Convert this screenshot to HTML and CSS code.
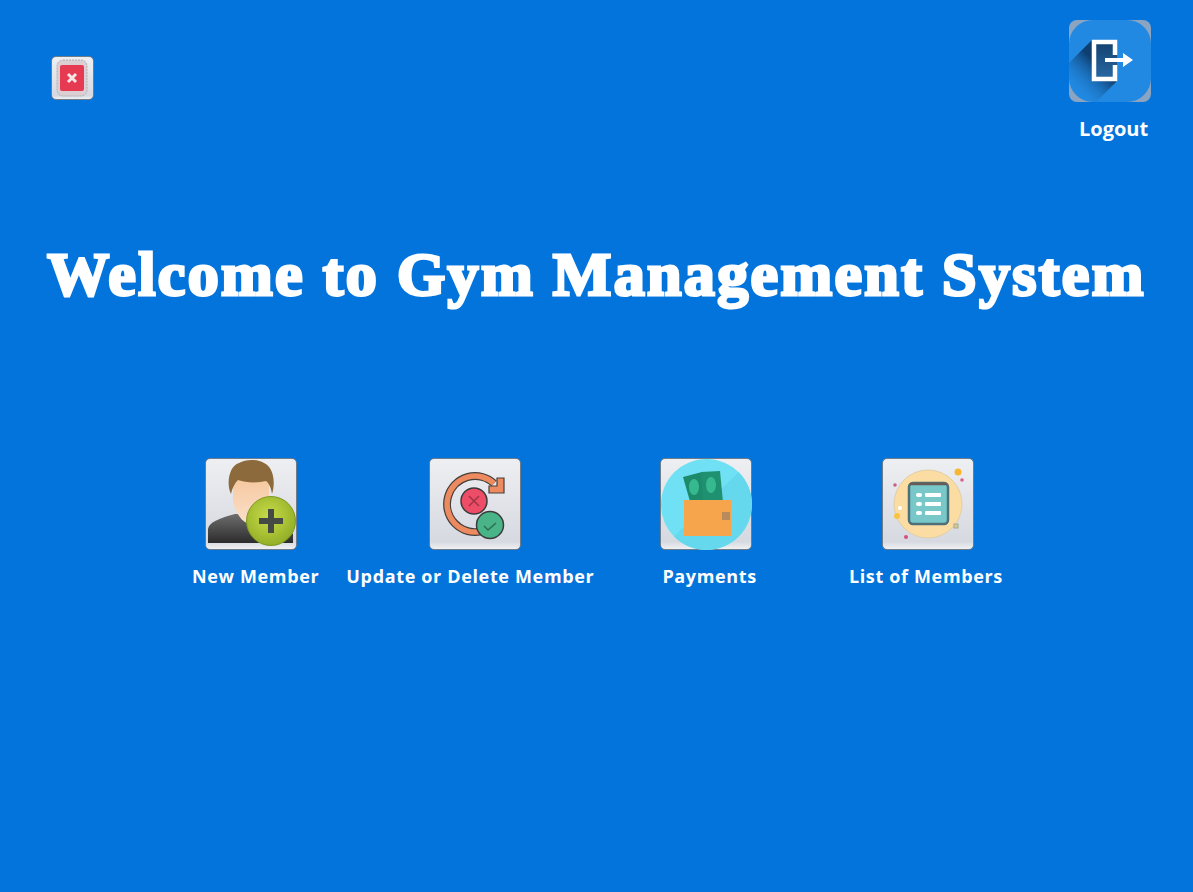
FILE: index.html
```html
<!DOCTYPE html>
<html lang="en">

<head>
    <meta charset="UTF-8">
    <title>Gym Management System</title>
    <link rel="stylesheet" href="styles.css">
</head>

<body>
    <div class="top">
        <button class="btn closeBtn">
            <svg width="41" height="42" viewBox="0 0 41 42">
                <rect x="5" y="3" width="30" height="36" rx="6" fill="#dccfd4" stroke="#b0b0b4" stroke-dasharray="2 1" />
                <rect x="8" y="8" width="24" height="26" rx="2" fill="#e63a52" />
                <path d="M16 17l8 8M24 17l-8 8" stroke="#f6e4e6" stroke-width="3" />
            </svg>
        </button>
        <div class="logout">
            <button class="logoutBtn">
                <svg width="82" height="82" viewBox="0 0 82 82">
                    <defs>
                        <linearGradient id="shade" gradientUnits="userSpaceOnUse" x1="32" y1="48" x2="6" y2="74">
                            <stop offset="0" stop-color="#0f3f70" />
                            <stop offset="1" stop-color="#2189e2" stop-opacity="0" />
                        </linearGradient>
                        <linearGradient id="door" x1="0" y1="0" x2="0" y2="1">
                            <stop offset="0" stop-color="#123f6c" />
                            <stop offset="1" stop-color="#2a6ba8" />
                        </linearGradient>
                    </defs>
                    <rect width="82" height="82" rx="8" fill="#8ba4c2" />
                    <rect width="82" height="82" rx="24" fill="#2189e2" />
                    <path d="M23 20L0 43v27l12 12h15l21-21z" fill="url(#shade)" />
                    <path d="M23 20h25v41H23z" fill="url(#door)" />
                    <path d="M46 35V22H25v37h21V45" fill="none" stroke="#fff" stroke-width="4.500" />
                    <path d="M36 38h18v-5l10 7-10 7v-5H36z" fill="#fff" />
                </svg>
            </button>
            <span class="logoutText">Logout</span>
        </div>
    </div>

    <h1 class="title">Welcome to Gym Management System</h1>

    <div class="iconRow">
        <button class="btn menuBtn">
            <svg width="89" height="89" viewBox="0 0 89 89">
                <defs>
                    <linearGradient id="body" x1="0" y1="0" x2="0" y2="1">
                        <stop offset="0" stop-color="#6d6d6d" />
                        <stop offset="1" stop-color="#2c2c2c" />
                    </linearGradient>
                    <linearGradient id="face" x1="0" y1="0" x2="0" y2="1">
                        <stop offset="0" stop-color="#f6c9a0" />
                        <stop offset="1" stop-color="#fbe0cb" />
                    </linearGradient>
                    <radialGradient id="lime" cx=".45" cy=".4" r=".7">
                        <stop offset="0" stop-color="#c9dc4a" />
                        <stop offset="1" stop-color="#8aa821" />
                    </radialGradient>
                </defs>
                <path d="M1 83V69c1-7 12-11 27-15h30l28 20v9z" fill="url(#body)" />
                <path d="M26 20h36v22c-3 12-10 22-18 22s-15-10-18-22z" fill="url(#face)" />
                <path d="M24 34C19 24 22 6 32 3 39-1 50-1 57 3c9 4 12 18 8 31-1-6-3-11-6-13-8 2-20 2-28-1-3 3-6 8-7 14z" fill="#8c6a3c" />
                <circle cx="64" cy="61" r="24.500" fill="url(#lime)" stroke="#7d9a20" />
                <path d="M64 49v24M52 61h24" stroke="#454a45" stroke-width="6" />
            </svg>
        </button>
        <button class="btn menuBtn">
            <svg width="89" height="89" viewBox="0 0 89 89">
                <path d="M50 71.400A28 28 0 1 1 63 23.400" fill="none" stroke="#45403c" stroke-width="8" />
                <path d="M50 71.400A28 28 0 1 1 63 23.400" fill="none" stroke="#ee8a60" stroke-width="5.500" />
                <path d="M58 26h8v-8h7v15H58z" fill="#ee8a60" stroke="#45403c" stroke-width="1.200" />
                <circle cx="43" cy="41" r="13" fill="#ee4d68" stroke="#3c3c3c" stroke-width="1.500" />
                <path d="M38 36l10 10M48 36l-10 10" stroke="#9e3445" stroke-width="1.500" />
                <circle cx="59" cy="65" r="13.500" fill="#48b487" stroke="#3c3c3c" stroke-width="1.500" />
                <path d="M53 66l4 4 8-7" fill="none" stroke="#2f6d55" stroke-width="1.500" />
            </svg>
        </button>
        <button class="btn menuBtn payBtn">
            <svg width="91" height="91" viewBox="0 0 91 91">
                <circle cx="45.500" cy="45.500" r="45.500" fill="#70e0f4" />
                <path d="M77.500 13A45.500 45.500 0 0 1 13 77.500z" fill="#66d8ee" />
                <path d="M22 18l19-5 7 30-18 3z" fill="#1d8a6a" />
                <path d="M40 13l19-1 3 31-20 2z" fill="#1f9070" />
                <ellipse cx="33" cy="28" rx="5" ry="8" fill="#37b98f" />
                <ellipse cx="50" cy="26" rx="5" ry="8" fill="#37b98f" />
                <path d="M23 41h47v36H23z" fill="#f6a54c" />
                <path d="M61 53h8v8h-8z" fill="#b88a5c" />
            </svg>
        </button>
        <button class="btn menuBtn">
            <svg width="89" height="89" viewBox="0 0 89 89">
                <circle cx="44" cy="44" r="34" fill="#fbdca2" stroke="#e0cfa8" />
                <rect x="25" y="23" width="39" height="41" rx="4" fill="#78c8ca" stroke="#4d7078" stroke-width="2.500" />
                <path d="M26 24h37" stroke="#6a5a55" stroke-width="2.500" />
                <g fill="#fff">
                    <rect x="32" y="33" width="6" height="4" rx="2" />
                    <rect x="41" y="33" width="16" height="4" rx="1" />
                    <rect x="32" y="42" width="6" height="4" rx="2" />
                    <rect x="41" y="42" width="16" height="4" rx="1" />
                    <rect x="32" y="51" width="6" height="4" rx="2" />
                    <rect x="41" y="51" width="16" height="4" rx="1" />
                    <circle cx="16" cy="48" r="2" />
                </g>
                <circle cx="74" cy="12" r="3.500" fill="#f7b733" />
                <circle cx="13" cy="56" r="3" fill="#f7c542" />
                <circle cx="78" cy="20" r="1.800" fill="#d8608a" />
                <circle cx="11" cy="25" r="1.800" fill="#c9608a" />
                <circle cx="22" cy="77" r="2" fill="#d8507a" />
                <rect x="70" y="64" width="4" height="4" fill="#d6cc9a" stroke="#a8a888" />
            </svg>
        </button>
    </div>

    <div class="labelRow">
        <span class="label">New Member</span>
        <span class="label">Update or Delete Member</span>
        <span class="label">Payments</span>
        <span class="label">List of Members</span>
    </div>
</body>

</html>
```

FILE: styles.css
```css
* {
    margin: 0;
    padding: 0;
    box-sizing: border-box;
}

html,
body {
    height: 100%;
}

body {
    background-color: #0274dc;
    color: #fff;
    font-family: "Open Sans", "Noto Sans", sans-serif;
    overflow: hidden;
}

.top {
    display: flex;
    justify-content: space-between;
    align-items: flex-start;
    padding: 20px 42px 0 51px;
    height: 230px;
}

button {
    display: block;
    border: none;
    background: none;
}

.btn {
    display: flex;
    align-items: center;
    justify-content: center;
    border: 1px solid #6f7c8a;
    border-radius: 5px;
    background: linear-gradient(#eeeff2, #d6d9e0 92%, #f0f1f3);
}

.closeBtn {
    width: 43px;
    height: 44px;
    margin-top: 36px;
}

.logout {
    display: flex;
    flex-direction: column;
}

.logoutBtn {
    width: 82px;
    height: 82px;
    margin-left: -10px;
}

.logoutText {
    margin-top: 13px;
    font-size: 20px;
    line-height: 27px;
    font-weight: 700;
}

.title {
    height: 88px;
    text-align: center;
    font-family: "Liberation Serif", serif;
    font-size: 62px;
    line-height: 88px;
    font-weight: 700;
    letter-spacing: 2.36px;
    white-space: nowrap;
    -webkit-text-stroke: 3px #fff;
}

.iconRow {
    display: flex;
    margin-top: 140px;
    padding-left: 205px;
}

.menuBtn {
    width: 92px;
    height: 92px;
}

.menuBtn+.menuBtn {
    margin-left: 132px;
}

.menuBtn:nth-child(3) {
    margin-left: 139px;
}

.menuBtn:nth-child(4) {
    margin-left: 130px;
}

.payBtn svg {
    flex: none;
}

.labelRow {
    display: flex;
    margin-top: 14px;
    padding-left: 192px;
}

.label {
    font-size: 18px;
    line-height: 25px;
    font-weight: 700;
    letter-spacing: 0.65px;
    white-space: nowrap;
}

.label:nth-child(2) {
    margin-left: 27px;
}

.label:nth-child(3) {
    margin-left: 68px;
}

.label:nth-child(4) {
    margin-left: 92px;
}
```
